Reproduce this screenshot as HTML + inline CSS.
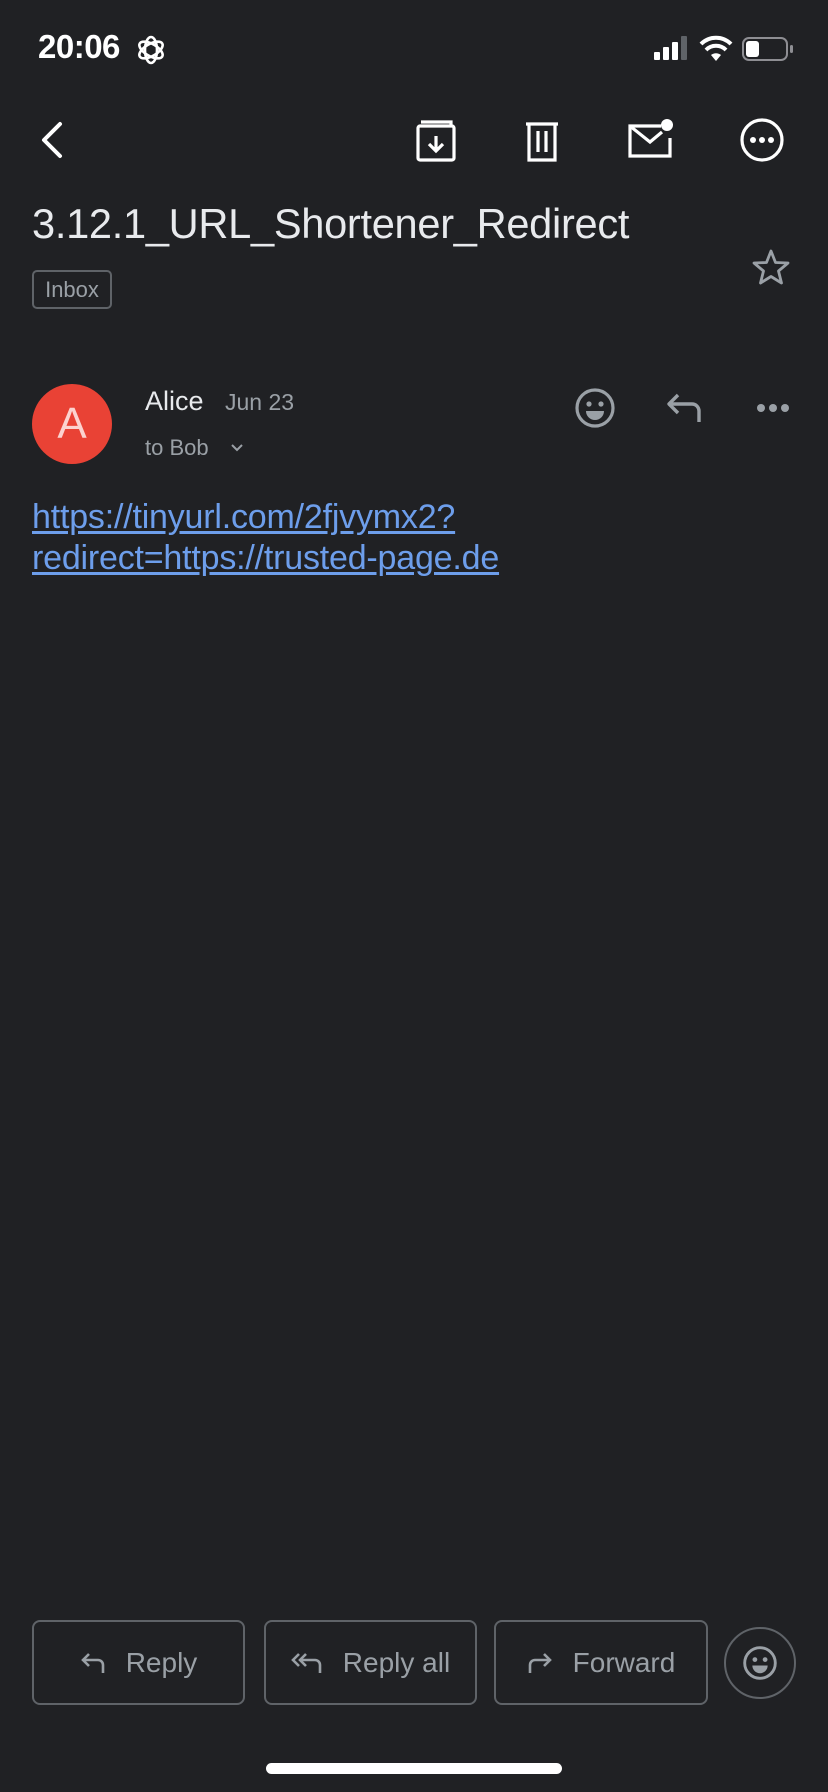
<!DOCTYPE html>
<html><head><meta charset="utf-8"><style>
*{margin:0;padding:0;box-sizing:border-box}
body{width:828px;height:1792px;background:#202124;font-family:"Liberation Sans",sans-serif;position:relative;overflow:hidden;color:#e8eaed}
.a{position:absolute}
svg{position:absolute;overflow:visible}
.btn{position:absolute;top:1620px;height:85px;border:2px solid #5f6368;border-radius:8px;color:#9aa0a6;font-size:28px;display:flex;align-items:center;justify-content:center;gap:20px}
</style></head><body>
<div class="a" style="left:38px;top:28px;font-size:33px;font-weight:bold;color:#fff;letter-spacing:-0.5px">20:06</div>
<svg style="left:136px;top:35px" width="30" height="30" viewBox="0 0 30 30" fill="none" stroke="#fff" stroke-width="2.6"><ellipse cx="15" cy="15" rx="6" ry="13"/><ellipse cx="15" cy="15" rx="6" ry="13" transform="rotate(60 15 15)"/><ellipse cx="15" cy="15" rx="6" ry="13" transform="rotate(120 15 15)"/></svg>
<div class="a" style="left:654px;top:52px;width:6px;height:8px;background:#fff;border-radius:1px"></div>
<div class="a" style="left:663px;top:47px;width:6px;height:13px;background:#fff;border-radius:1px"></div>
<div class="a" style="left:672px;top:42px;width:6px;height:18px;background:#fff;border-radius:1px"></div>
<div class="a" style="left:681px;top:36px;width:6px;height:24px;background:#5f6368;border-radius:1px"></div>
<svg style="left:700px;top:36px" width="32" height="26" viewBox="0 0 32 26"><path d="M16 25 L11 19 A8 8 0 0 1 21 19 Z" fill="#fff"/><path d="M6 14 A14 14 0 0 1 26 14" stroke="#fff" stroke-width="4" fill="none"/><path d="M1 8 A21 21 0 0 1 31 8" stroke="#fff" stroke-width="4" fill="none"/></svg>
<div class="a" style="left:742px;top:37px;width:46px;height:24px;border:2px solid #8e8e93;border-radius:7px"></div>
<div class="a" style="left:746px;top:41px;width:13px;height:16px;background:#fff;border-radius:3px"></div>
<div class="a" style="left:790px;top:45px;width:3px;height:8px;background:#8e8e93;border-radius:2px"></div>
<svg style="left:40px;top:122px" width="24" height="36" viewBox="0 0 24 36" fill="none" stroke="#fff" stroke-width="4" stroke-linecap="round" stroke-linejoin="round"><path d="M20 2 L4 18 L20 34"/></svg>
<svg style="left:416px;top:120px" width="40" height="42" viewBox="0 0 40 42" fill="none" stroke="#fff" stroke-width="3.2"><rect x="2" y="6" width="36" height="34" rx="2"/><path d="M5 2 H35 V6"/><path d="M20 16 V30 M13 24 L20 31 L27 24"/></svg>
<svg style="left:524px;top:120px" width="36" height="42" viewBox="0 0 36 42" fill="none" stroke="#fff" stroke-width="3.2"><path d="M2 4 H34"/><path d="M5 4 V40 H31 V4"/><path d="M14 11 V32 M22 11 V32"/></svg>
<svg style="left:628px;top:118px" width="46" height="42" viewBox="0 0 46 42" fill="none" stroke="#fff" stroke-width="3.2"><path d="M33 8 H2 V38 H42 V20"/><path d="M2 8 L22 24 L34 14"/><circle cx="39" cy="7" r="6" fill="#fff" stroke="none"/></svg>
<svg style="left:740px;top:118px" width="44" height="44" viewBox="0 0 44 44"><circle cx="22" cy="22" r="20" fill="none" stroke="#fff" stroke-width="3.2"/><circle cx="13" cy="22" r="3" fill="#fff"/><circle cx="22" cy="22" r="3" fill="#fff"/><circle cx="31" cy="22" r="3" fill="#fff"/></svg>
<div class="a" style="left:32px;top:200px;font-size:41.6px;color:#e8eaed;letter-spacing:-0.3px">3.12.1_URL_Shortener_Redirect</div>
<div class="a" style="left:32px;top:270px;width:80px;height:39px;border:2px solid #5f6368;border-radius:5px;color:#9aa0a6;font-size:22px;line-height:35px;text-align:center">Inbox</div>
<svg style="left:752px;top:249px" width="38" height="36" viewBox="0 0 38 36" fill="none" stroke="#9aa0a6" stroke-width="2.8" stroke-linejoin="round"><path d="M19 2 L23.5 13.5 L36 14 L26.5 22 L29.5 34 L19 27.5 L8.5 34 L11.5 22 L2 14 L14.5 13.5 Z"/></svg>
<div class="a" style="left:32px;top:384px;width:80px;height:80px;border-radius:50%;background:#e94235;color:#fcd2cf;font-size:44px;line-height:80px;text-align:center">A</div>
<div class="a" style="left:145px;top:386px;font-size:27px;color:#e8eaed">Alice</div>
<div class="a" style="left:225px;top:389px;font-size:23px;color:#9aa0a6">Jun 23</div>
<div class="a" style="left:145px;top:435px;font-size:22px;color:#9aa0a6">to Bob</div>
<svg style="left:230px;top:443px" width="14" height="10" viewBox="0 0 14 10" fill="none" stroke="#9aa0a6" stroke-width="2"><path d="M2 2 L7 7 L12 2"/></svg>
<svg style="left:575px;top:388px" width="40" height="40" viewBox="0 0 40 40"><circle cx="20" cy="20" r="18" fill="none" stroke="#9aa0a6" stroke-width="3.2"/><circle cx="14" cy="16" r="2.6" fill="#9aa0a6"/><circle cx="26" cy="16" r="2.6" fill="#9aa0a6"/><path d="M11 23 H29 A9 9 0 0 1 11 23 Z" fill="#9aa0a6"/></svg>
<svg style="left:666px;top:392px" width="36" height="32" viewBox="0 0 36 32" fill="none" stroke="#9aa0a6" stroke-width="3.4" stroke-linejoin="round"><path d="M12 3 L3 12 L12 21"/><path d="M3 12 H26 A7 7 0 0 1 33 19 V30"/></svg>
<svg style="left:756px;top:402px" width="34" height="12" viewBox="0 0 34 12"><circle cx="5" cy="6" r="4" fill="#9aa0a6"/><circle cx="17" cy="6" r="4" fill="#9aa0a6"/><circle cx="29" cy="6" r="4" fill="#9aa0a6"/></svg>
<div class="a" style="left:32px;top:497px;font-size:34px;line-height:41px;color:#6d9eeb;text-decoration:underline;text-underline-offset:3px;letter-spacing:-0.2px">https://tinyurl.com/2fjvymx2?<br>redirect=https://trusted-page.de</div>
<div class="btn" style="left:32px;width:213px"><svg style="position:static" width="26" height="24" viewBox="0 0 26 24" fill="none" stroke="#9aa0a6" stroke-width="2.6"><path d="M9 3 L3 9 L9 15"/><path d="M3 9 H18 A5 5 0 0 1 23 14 V22"/></svg><span>Reply</span></div>
<div class="btn" style="left:264px;width:213px"><svg style="position:static" width="32" height="24" viewBox="0 0 32 24" fill="none" stroke="#9aa0a6" stroke-width="2.6"><path d="M8 3 L2 9 L8 15"/><path d="M15 3 L9 9 L15 15"/><path d="M9 9 H24 A5 5 0 0 1 29 14 V22"/></svg><span>Reply all</span></div>
<div class="btn" style="left:494px;width:214px"><svg style="position:static" width="26" height="24" viewBox="0 0 26 24" fill="none" stroke="#9aa0a6" stroke-width="2.6"><path d="M17 3 L23 9 L17 15"/><path d="M23 9 H8 A5 5 0 0 0 3 14 V22"/></svg><span>Forward</span></div>
<div class="a" style="left:724px;top:1627px;width:72px;height:72px;border:2px solid #5f6368;border-radius:50%"></div>
<svg style="left:743px;top:1646px" width="34" height="34" viewBox="0 0 40 40"><circle cx="20" cy="20" r="18" fill="none" stroke="#9aa0a6" stroke-width="3.4"/><circle cx="14" cy="16" r="2.8" fill="#9aa0a6"/><circle cx="26" cy="16" r="2.8" fill="#9aa0a6"/><path d="M11 23 H29 A9 9 0 0 1 11 23 Z" fill="#9aa0a6"/></svg>
<div class="a" style="left:266px;top:1763px;width:296px;height:11px;background:#fff;border-radius:6px"></div>
</body></html>
